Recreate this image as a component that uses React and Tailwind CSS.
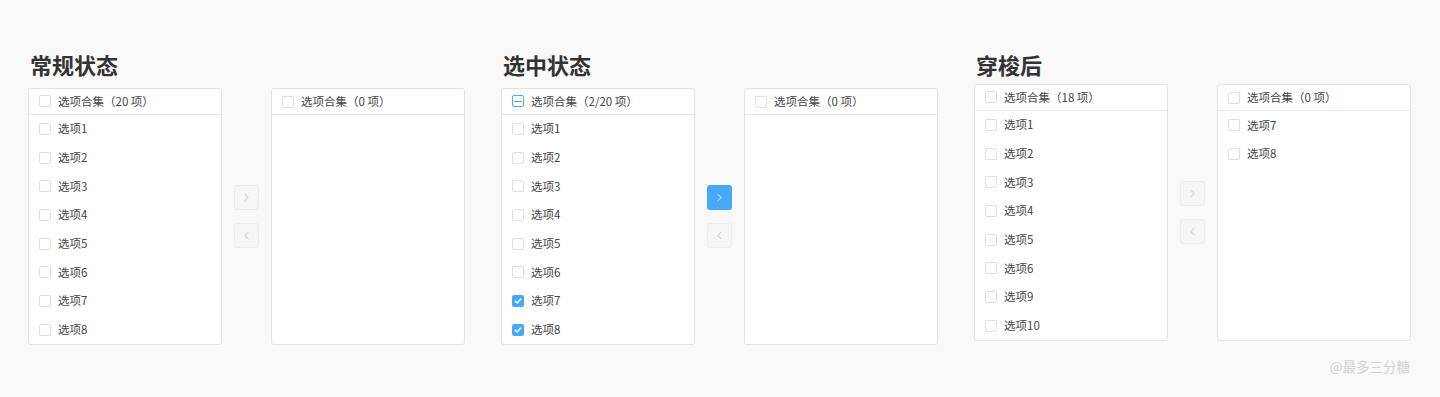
import { ChevronRight, ChevronLeft } from "lucide-react";

const font = { fontFamily: '"Noto Sans CJK SC", "Noto Sans", sans-serif' };

function Box({ state }) {
  if (state === "checked") {
    return (
      <span className="w-[12px] h-[12px] rounded-[2px] bg-[#4aa8fa] flex items-center justify-center shrink-0">
        <svg width="8" height="8" viewBox="0 0 8 8" fill="none">
          <path d="M1.2 4.2 L3.2 6 L6.8 2" stroke="white" strokeWidth="1.4" strokeLinecap="round" strokeLinejoin="round" />
        </svg>
      </span>
    );
  }
  if (state === "some") {
    return (
      <span className="w-[12px] h-[12px] rounded-[2px] border border-[#4aa8fa] bg-white flex items-center justify-center shrink-0">
        <span className="w-[8px] h-[1.5px] bg-[#4aa8fa]" />
      </span>
    );
  }
  return <span className="w-[12px] h-[12px] rounded-[2px] border border-[#dedede] bg-white shrink-0" />;
}

function List({ title, titleState, items }) {
  return (
    <div className="w-[194px] h-[257px] bg-white border border-[#e3e3e3] rounded-[3px] flex flex-col">
      <div className="h-[26px] flex items-center gap-[7px] px-[10px] border-b border-[#e6e6e6] text-[11.5px] text-[#444]">
        <Box state={titleState} />
        <span>{title}</span>
      </div>
      <div className="flex flex-col">
        {items.map((it) => (
          <div key={it.label} className="h-[28.7px] flex items-center gap-[7px] px-[10px] text-[11.5px] text-[#444]">
            <Box state={it.checked ? "checked" : ""} />
            <span>{it.label}</span>
          </div>
        ))}
      </div>
    </div>
  );
}

function Arrows({ active }) {
  return (
    <div className="flex flex-col gap-[13px]">
      <div
        className={
          active
            ? "w-[25px] h-[25px] rounded-[3px] bg-[#4aa8fa] flex items-center justify-center text-white"
            : "w-[25px] h-[25px] rounded-[3px] bg-[#f5f6f8] border border-[#ececec] flex items-center justify-center text-[#b8b8b8]"
        }
      >
        <ChevronRight size={13} strokeWidth={1.6} />
      </div>
      <div className="w-[25px] h-[25px] rounded-[3px] bg-[#f5f6f8] border border-[#ececec] flex items-center justify-center text-[#b8b8b8]">
        <ChevronLeft size={13} strokeWidth={1.6} />
      </div>
    </div>
  );
}

function Section({ title, left, right, active, mt }) {
  return (
    <div className="flex flex-col">
      <h2 className="text-[22px] leading-[30px] font-bold text-[#333] pl-[2px]">{title}</h2>
      <div className={`flex items-center gap-[12px] ${mt}`}>
        <List {...left} />
        <Arrows active={active} />
        <List {...right} />
      </div>
    </div>
  );
}

const mk = (labels, checked = []) => labels.map((l) => ({ label: l, checked: checked.includes(l) }));
const eight = ["选项1", "选项2", "选项3", "选项4", "选项5", "选项6", "选项7", "选项8"];

export default function App() {
  return (
    <div style={font} className="relative w-full h-[397px] bg-[#f9f9f9] pt-[49px] px-[28px] flex gap-[36px]">
      <Section
        title="常规状态"
        mt="mt-[9px]"
        left={{ title: "选项合集（20 项）", items: mk(eight) }}
        right={{ title: "选项合集（0 项）", items: [] }}
      />
      <Section
        title="选中状态"
        mt="mt-[9px]"
        active
        left={{ title: "选项合集（2/20 项）", titleState: "some", items: mk(eight, ["选项7", "选项8"]) }}
        right={{ title: "选项合集（0 项）", items: [] }}
      />
      <Section
        title="穿梭后"
        mt="mt-[5px]"
        left={{ title: "选项合集（18 项）", items: mk(["选项1", "选项2", "选项3", "选项4", "选项5", "选项6", "选项9", "选项10"]) }}
        right={{ title: "选项合集（0 项）", items: mk(["选项7", "选项8"]) }}
      />
      <div className="absolute right-[30px] bottom-[21px] text-[13.5px] text-[#d2d2d2]">@最多三分糖</div>
    </div>
  );
}
